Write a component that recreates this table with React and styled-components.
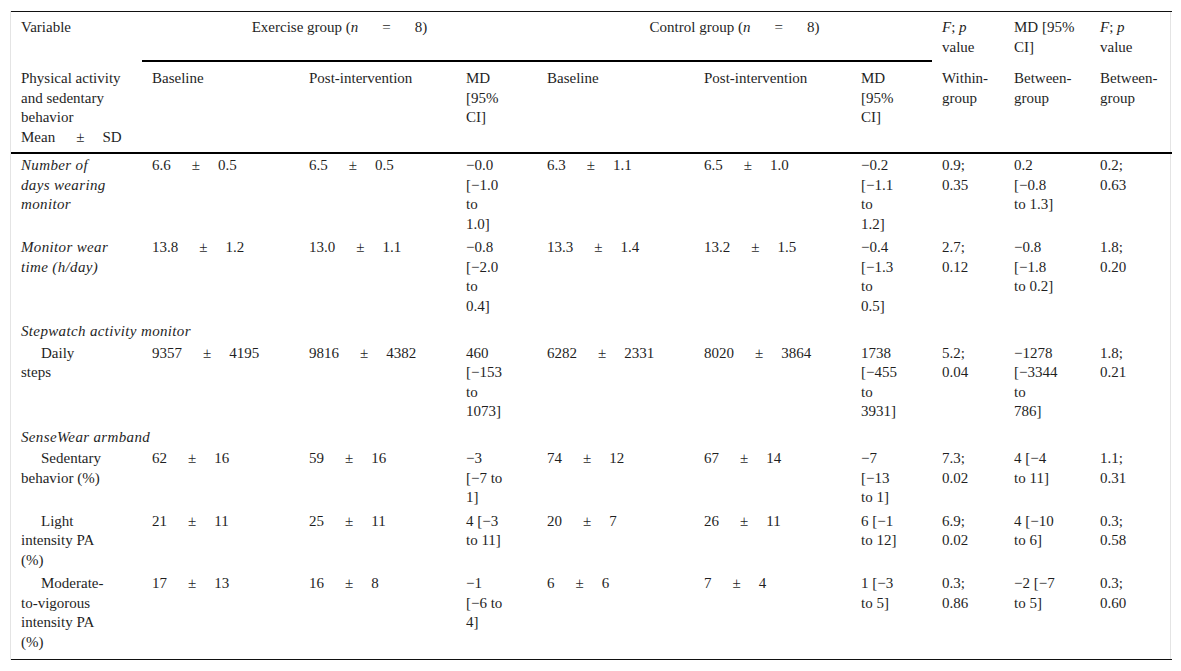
import React from "react";
import styled, { createGlobalStyle } from "styled-components";

const Global = createGlobalStyle`
  html, body { margin: 0; padding: 0; background: #fff; }
  body { font-family: "Liberation Serif", "Times New Roman", serif; color: #1f1f1f; }
`;

const Frame = styled.div`
  margin: 11px 10px 0 10px;
  border-left: 1px solid #e4e4e4;
  border-right: 1px solid #e4e4e4;
`;

const Table = styled.table`
  width: 100%;
  table-layout: fixed;
  border-collapse: separate;
  border-spacing: 0;
  border-top: 1px solid #111;
  border-bottom: 1px solid #111;
  font-family: "Liberation Serif", "Times New Roman", serif;
  font-size: 15px;
  line-height: 19.5px;
  color: #1f1f1f;
`;

const Th = styled.th`
  font-weight: normal;
  text-align: ${(p) => (p.$center ? "center" : "left")};
  vertical-align: top;
  white-space: nowrap;
  padding: ${(p) => (p.$top ? "6px 10px 5px 10px" : "7px 0 5px 10px")};
  border-bottom: ${(p) => (p.$rule ? "2px solid #000" : "none")};
`;

const Td = styled.td`
  vertical-align: top;
  white-space: nowrap;
  padding: 2px 0 ${(p) => (p.$last ? "7px" : "2px")} 10px;
  font-style: ${(p) => (p.$italic ? "italic" : "normal")};
  letter-spacing: ${(p) => (p.$italic ? "0.35px" : "0")};
  text-indent: ${(p) => (p.$indent ? "20px" : "0")};
`;

const SubTd = styled.td`
  font-style: italic;
  letter-spacing: 0.35px;
  white-space: nowrap;
  padding: 4px 0 0 10px;
`;

const Stat = styled.span`
  display: inline-flex;
  align-items: baseline;
`;

const Pm = styled.span`
  margin: 0 18px 0 21px;
`;

const Eq = styled.span`
  margin: 0 24px;
`;

const Lines = ({ lines }) =>
  lines.map((l, i) => (
    <React.Fragment key={i}>
      {i > 0 && <br />}
      {l}
    </React.Fragment>
  ));

const S = ({ v }) => {
  const [m, sd] = v.split("|");
  return (
    <Stat>
      <span>{m}</span>
      <Pm>±</Pm>
      <span>{sd}</span>
    </Stat>
  );
};

const Fp = () => (
  <>
    <i>F</i>; <i>p</i>
  </>
);

const widths = [131, 157, 157, 81, 157, 157, 81, 72, 86, 82];

const rows = [
  {
    label: ["Number of", "days wearing", "monitor"],
    italic: true,
    cells: [
      "6.6|0.5",
      "6.5|0.5",
      ["−0.0", "[−1.0", "to", "1.0]"],
      "6.3|1.1",
      "6.5|1.0",
      ["−0.2", "[−1.1", "to", "1.2]"],
      ["0.9;", "0.35"],
      ["0.2", "[−0.8", "to 1.3]"],
      ["0.2;", "0.63"],
    ],
  },
  {
    label: ["Monitor wear", "time (h/day)"],
    italic: true,
    cells: [
      "13.8|1.2",
      "13.0|1.1",
      ["−0.8", "[−2.0", "to", "0.4]"],
      "13.3|1.4",
      "13.2|1.5",
      ["−0.4", "[−1.3", "to", "0.5]"],
      ["2.7;", "0.12"],
      ["−0.8", "[−1.8", "to 0.2]"],
      ["1.8;", "0.20"],
    ],
  },
  { sub: "Stepwatch activity monitor" },
  {
    label: ["Daily", "steps"],
    indent: true,
    cells: [
      "9357|4195",
      "9816|4382",
      ["460", "[−153", "to", "1073]"],
      "6282|2331",
      "8020|3864",
      ["1738", "[−455", "to", "3931]"],
      ["5.2;", "0.04"],
      ["−1278", "[−3344", "to", "786]"],
      ["1.8;", "0.21"],
    ],
  },
  { sub: "SenseWear armband" },
  {
    label: ["Sedentary", "behavior (%)"],
    indent: true,
    cells: [
      "62|16",
      "59|16",
      ["−3", "[−7 to", "1]"],
      "74|12",
      "67|14",
      ["−7", "[−13", "to 1]"],
      ["7.3;", "0.02"],
      ["4 [−4", "to 11]"],
      ["1.1;", "0.31"],
    ],
  },
  {
    label: ["Light", "intensity PA", "(%)"],
    indent: true,
    cells: [
      "21|11",
      "25|11",
      ["4 [−3", "to 11]"],
      "20|7",
      "26|11",
      ["6 [−1", "to 12]"],
      ["6.9;", "0.02"],
      ["4 [−10", "to 6]"],
      ["0.3;", "0.58"],
    ],
  },
  {
    label: ["Moderate-", "to-vigorous", "intensity PA", "(%)"],
    indent: true,
    cells: [
      "17|13",
      "16|8",
      ["−1", "[−6 to", "4]"],
      "6|6",
      "7|4",
      ["1 [−3", "to 5]"],
      ["0.3;", "0.86"],
      ["−2 [−7", "to 5]"],
      ["0.3;", "0.60"],
    ],
  },
];

const GroupTitle = ({ name }) => (
  <>
    {name} (<i>n</i>
    <Eq>=</Eq>8)
  </>
);

export default function App() {
  const lastIdx = rows.length - 1;
  return (
    <>
      <Global />
      <Frame>
        <Table>
          <colgroup>
            {widths.map((w, i) => (
              <col key={i} style={{ width: w }} />
            ))}
          </colgroup>
          <thead>
            <tr>
              <Th $top>Variable</Th>
              <Th $top $center $rule colSpan={3}>
                <GroupTitle name="Exercise group" />
              </Th>
              <Th $top $center $rule colSpan={3}>
                <GroupTitle name="Control group" />
              </Th>
              <Th $top>
                <Fp />
                <br />
                value
              </Th>
              <Th $top>
                MD [95%
                <br />
                CI]
              </Th>
              <Th $top>
                <Fp />
                <br />
                value
              </Th>
            </tr>
            <tr>
              <Th $rule>
                Physical activity
                <br />
                and sedentary
                <br />
                behavior
                <br />
                Mean<Pm>±</Pm>SD
              </Th>
              <Th $rule>Baseline</Th>
              <Th $rule>Post-intervention</Th>
              <Th $rule>
                <Lines lines={["MD", "[95%", "CI]"]} />
              </Th>
              <Th $rule>Baseline</Th>
              <Th $rule>Post-intervention</Th>
              <Th $rule>
                <Lines lines={["MD", "[95%", "CI]"]} />
              </Th>
              <Th $rule>
                <Lines lines={["Within-", "group"]} />
              </Th>
              <Th $rule>
                <Lines lines={["Between-", "group"]} />
              </Th>
              <Th $rule>
                <Lines lines={["Between-", "group"]} />
              </Th>
            </tr>
          </thead>
          <tbody>
            {rows.map((r, ri) =>
              r.sub ? (
                <tr key={ri}>
                  <SubTd colSpan={10}>{r.sub}</SubTd>
                </tr>
              ) : (
                <tr key={ri}>
                  <Td $italic={r.italic} $indent={r.indent} $last={ri === lastIdx}>
                    <Lines lines={r.label} />
                  </Td>
                  {r.cells.map((c, ci) => (
                    <Td key={ci} $last={ri === lastIdx}>
                      {typeof c === "string" ? <S v={c} /> : <Lines lines={c} />}
                    </Td>
                  ))}
                </tr>
              )
            )}
          </tbody>
        </Table>
      </Frame>
    </>
  );
}
